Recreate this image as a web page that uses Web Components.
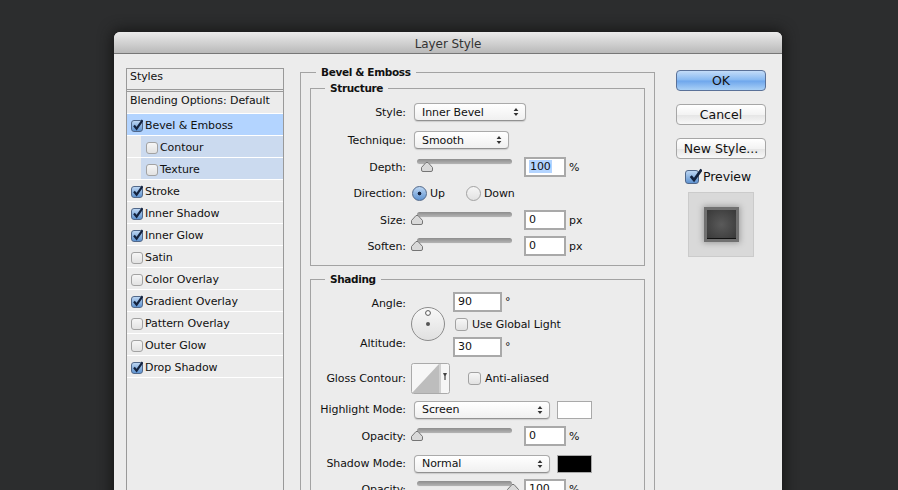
<!DOCTYPE html>
<html>
<head>
<meta charset="utf-8">
<title>Layer Style</title>
<style>
  html, body { margin: 0; height: 100%; overflow: hidden; }
  body {
    background: #2c2d2e;
    padding: 32px 116px 0 114px;
    box-sizing: border-box;
    font: 11px "DejaVu Sans", sans-serif;
    letter-spacing: -.08px;
    color: #111;
  }
</style>
</head>
<body>
<ps-dialog title="Layer Style">
  <ps-style-list slot="left">
    <ps-style-item header>Styles</ps-style-item>
    <ps-style-item>Blending Options: Default</ps-style-item>
    <ps-style-item check checked active>Bevel &amp; Emboss</ps-style-item>
    <ps-style-item check sub>Contour</ps-style-item>
    <ps-style-item check sub>Texture</ps-style-item>
    <ps-style-item check checked>Stroke</ps-style-item>
    <ps-style-item check checked>Inner Shadow</ps-style-item>
    <ps-style-item check checked>Inner Glow</ps-style-item>
    <ps-style-item check>Satin</ps-style-item>
    <ps-style-item check>Color Overlay</ps-style-item>
    <ps-style-item check checked>Gradient Overlay</ps-style-item>
    <ps-style-item check>Pattern Overlay</ps-style-item>
    <ps-style-item check>Outer Glow</ps-style-item>
    <ps-style-item check checked>Drop Shadow</ps-style-item>
  </ps-style-list>

  <ps-group slot="middle" outer legend="Bevel &amp; Emboss">
    <ps-group legend="Structure">
      <ps-row label="Style:" style="height:28px"><ps-select width="112">Inner Bevel</ps-select></ps-row>
      <ps-row label="Technique:" style="height:28px"><ps-select width="95">Smooth</ps-select></ps-row>
      <ps-row label="Depth:" style="height:26px"><ps-slider pos="10"></ps-slider><ps-num selected unit="%">100</ps-num></ps-row>
      <ps-row label="Direction:" style="height:27px">
        <ps-radio checked style="margin-right:20px">Up</ps-radio><ps-radio>Down</ps-radio>
      </ps-row>
      <ps-row label="Size:" style="height:26px"><ps-slider pos="0"></ps-slider><ps-num unit="px">0</ps-num></ps-row>
      <ps-row label="Soften:" style="height:26px;margin-bottom:-1px"><ps-slider pos="0"></ps-slider><ps-num unit="px">0</ps-num></ps-row>
    </ps-group>
    <ps-group legend="Shading" top="4" style="margin-top:6px">
      <ps-angle-block></ps-angle-block>
      <ps-row label="Gloss Contour:" style="height:36px;margin-top:3px">
        <ps-contour></ps-contour><ps-check style="margin-left:18px">Anti-aliased</ps-check>
      </ps-row>
      <ps-row label="Highlight Mode:" style="height:27px"><ps-select width="136">Screen</ps-select><ps-swatch color="#fff"></ps-swatch></ps-row>
      <ps-row label="Opacity:" style="height:26px"><ps-slider pos="0"></ps-slider><ps-num unit="%">0</ps-num></ps-row>
      <ps-row label="Shadow Mode:" style="height:29px"><ps-select width="136">Normal</ps-select><ps-swatch color="#000"></ps-swatch></ps-row>
      <ps-row label="Opacity:" style="height:22px"><ps-slider pos="100"></ps-slider><ps-num unit="%">100</ps-num></ps-row>
    </ps-group>
  </ps-group>

  <ps-button slot="right" primary>OK</ps-button>
  <ps-button slot="right">Cancel</ps-button>
  <ps-button slot="right">New Style...</ps-button>
  <ps-check slot="right" checked large style="margin:-3px 0 0 9px;font-size:12.5px">Preview</ps-check>
  <ps-preview slot="right"></ps-preview>
</ps-dialog>

<script>
const CHECK_MARK = '<path d="M3 6.5 L5.6 9.6 L11.6 1.2" fill="none" stroke="#14233f" stroke-width="2.2"/>';

// Caja de una casilla, marcada o no
function checkBox(checked) {
  const fill = checked ? "linear-gradient(#bcd6f3,#5f93d0)" : "linear-gradient(#f6f6f6,#e2e2e2)";
  const border = checked ? "#51688a" : "#a2a2a2";
  return `<span class="box" style="background:${fill};border-color:${border}">${checked ? `<svg viewBox="0 0 12 12" width="12" height="12">${CHECK_MARK}</svg>` : ""}</span>`;
}

class PsDialog extends HTMLElement {
  connectedCallback() {
    this.attachShadow({ mode: "open" }).innerHTML = `
      <style>
        :host { display: block; height: 600px; background: #ececec; border-radius: 6px 6px 0 0; box-shadow: 0 0 14px 2px #161616; }
        .title { height: 21px; line-height: 24px; text-align: center; color: #333; font-size: 12px;
          background: linear-gradient(#ebebeb, #b9b9b9); border-bottom: 1px solid #777; border-radius: 6px 6px 0 0; }
        .body { display: flex; padding: 14px 16px 0 12px; }
        .left { width: 158px; flex: none; }
        .middle { width: 355px; flex: none; margin: -3px 0 0 16px; }
        .right { width: 90px; flex: none; margin-left: 21px; padding-top: 2px; display: flex; flex-direction: column; }
      </style>
      <div class="title">${this.getAttribute("title")}</div>
      <div class="body">
        <div class="left"><slot name="left"></slot></div>
        <div class="middle"><slot name="middle"></slot></div>
        <div class="right"><slot name="right"></slot></div>
      </div>`;
  }
}

class PsStyleList extends HTMLElement {
  connectedCallback() {
    this.attachShadow({ mode: "open" }).innerHTML = `
      <style>
        :host { display: block; height: 600px; box-sizing: border-box; border: 1px solid #999; border-bottom: 0; }
      </style>
      <slot></slot>`;
  }
}

class PsStyleItem extends HTMLElement {
  connectedCallback() {
    const header = this.hasAttribute("header");
    const sub = this.hasAttribute("sub");
    const check = this.hasAttribute("check");
    const bg = this.hasAttribute("active") ? "#b3d4ff" : sub ? "#cbdaef" : "transparent";
    this.attachShadow({ mode: "open" }).innerHTML = `
      <style>
        :host { display: block; box-sizing: border-box; height: ${header ? 23 : 22}px;
          border-bottom: ${header ? "3px double #999" : "1px solid #fff"}; }
        .row { height: 21px; box-sizing: border-box; display: flex; gap: 2px; background: ${bg};
          align-items: ${check ? "center" : "flex-start"};
          margin-left: ${sub ? 14 : 0}px; padding: ${header ? 1 : 2}px 0 0 ${sub ? 5 : check ? 4 : 3}px; }
        .box { box-sizing: border-box; width: 12px; height: 12px; border: 1px solid; border-radius: 3px; flex: none; display: block; position: relative; }
        svg { position: absolute; left: -1px; top: -2px; }
      </style>
      <div class="row">${check ? checkBox(this.hasAttribute("checked")) : ""}<slot></slot></div>`;
  }
}

class PsGroup extends HTMLElement {
  connectedCallback() {
    const outer = this.hasAttribute("outer");
    const top = this.getAttribute("top") || 3;
    this.attachShadow({ mode: "open" }).innerHTML = `
      <style>
        :host { display: block; }
        fieldset { margin: 0; min-width: 0; border: 1px solid #a3a3a3; padding: ${outer ? "2px 9px 9px" : top + "px 0 7px"}; }
        legend { margin-left: ${outer ? 6 : 14}px; padding: 0 5px; font-weight: bold; font-size: 10.5px; letter-spacing: -.35px; line-height: 14px; }
      </style>
      <fieldset><legend>${this.getAttribute("legend")}</legend><slot></slot></fieldset>`;
  }
}

class PsRow extends HTMLElement {
  connectedCallback() {
    this.attachShadow({ mode: "open" }).innerHTML = `
      <style>
        :host { display: flex; align-items: center; }
        .label { width: 95px; flex: none; text-align: right; white-space: nowrap; margin-right: 5px; }
        .content { display: flex; align-items: center; flex: 1; }
      </style>
      <span class="label">${this.getAttribute("label")}</span>
      <div class="content"><slot></slot></div>`;
  }
}

class PsSelect extends HTMLElement {
  connectedCallback() {
    this.attachShadow({ mode: "open" }).innerHTML = `
      <style>
        :host { display: flex; align-items: center; justify-content: space-between; box-sizing: border-box;
          width: ${this.getAttribute("width")}px; height: 18px; margin-left: 3px; padding: 0 6px 0 7px;
          background: linear-gradient(#fff, #f0f0f0); border: 1px solid #aaa; border-bottom-color: #919191; border-radius: 4px; box-shadow: 0 1px 1px #ccc; }
      </style>
      <slot></slot>
      <svg width="6" height="10" viewBox="0 0 6 10"><path d="M3 1 L5.4 4 H.6Z M3 9 L5.4 6 H.6Z" fill="#333"/></svg>`;
  }
}

class PsSlider extends HTMLElement {
  connectedCallback() {
    const pos = Number(this.getAttribute("pos"));
    this.attachShadow({ mode: "open" }).innerHTML = `
      <style>
        :host { display: block; position: relative; width: 101px; height: 20px; flex: none; }
        .track { position: absolute; left: 6px; right: 0; top: 2px; height: 5px; border-radius: 2.5px;
          background: linear-gradient(#8d8d8d, #b5b5b5); box-shadow: 0 1px 0 #e8e8e8; }
        svg { position: absolute; left: ${pos * 0.96}px; top: 5px; }
      </style>
      <div class="track"></div>
      <svg width="12" height="10" viewBox="0 0 12 10"><path d="M5 .5 H7 L11.5 5.5 V8 Q11.5 9.5 10 9.5 H2 Q.5 9.5 .5 8 V5.5Z" fill="#d9d9d9" stroke="#757575"/></svg>`;
  }
}

class PsNum extends HTMLElement {
  connectedCallback() {
    const w = this.getAttribute("width") || 42;
    const unit = this.getAttribute("unit");
    this.attachShadow({ mode: "open" }).innerHTML = `
      <style>
        :host { display: flex; align-items: center; margin-left: ${this.getAttribute("gap") ?? 12}px; }
        .field { box-sizing: border-box; width: ${w}px; height: 20px; line-height: 16px; padding-left: 3px;
          background: #fff; border: 2px solid #a9a9a9; }
        .sel { background: #b3d4ff; padding: 0 1px; }
        .unit { margin-left: 3px; }
      </style>
      <div class="field"><span class="${this.hasAttribute("selected") ? "sel" : ""}"><slot></slot></span></div>
      <span class="unit">${unit}</span>`;
  }
}

class PsRadio extends HTMLElement {
  connectedCallback() {
    const on = this.hasAttribute("checked");
    this.attachShadow({ mode: "open" }).innerHTML = `
      <style>
        :host { display: flex; align-items: center; gap: 3px; margin-left: 1px; }
        .dot { width: 13px; height: 13px; border-radius: 50%; border: 1px solid ${on ? "#51688a" : "#a2a2a2"}; flex: none;
          background: ${on ? "radial-gradient(circle, #14233f 0 1.6px, transparent 2.2px), linear-gradient(#bcd6f3, #5f93d0)" : "linear-gradient(#f6f6f6, #e2e2e2)"}; }
      </style>
      <span class="dot"></span><slot></slot>`;
  }
}

class PsCheck extends HTMLElement {
  connectedCallback() {
    const large = this.hasAttribute("large");
    this.attachShadow({ mode: "open" }).innerHTML = `
      <style>
        :host { display: flex; align-items: center; gap: 4px; white-space: nowrap; }
        .box { width: ${large ? 12 : 11}px; height: ${large ? 12 : 11}px; border: 1px solid; border-radius: 3px; flex: none; display: block; position: relative; }
        svg { position: absolute; left: 1px; top: -3px; width: 15px; height: 15px; }
      </style>
      ${checkBox(this.hasAttribute("checked"))}<slot></slot>`;
  }
}

class PsAngleBlock extends HTMLElement {
  connectedCallback() {
    this.attachShadow({ mode: "open" }).innerHTML = `
      <style>
        :host { display: grid; grid-template-columns: 95px 34px auto; grid-template-rows: 23px 23px 21px; }
        .label { text-align: right; align-self: center; }
        .ang { margin-top: 3px; }
        .alt { margin-bottom: 6px; }
        .dial { grid-column: 2; grid-row: 1 / 4; align-self: center; margin-left: 5px; width: 34px; height: 34px; }
        .cell { grid-column: 3; display: flex; align-items: center; margin-left: 13px; }
      </style>
      <span class="label ang" style="grid-row:1">Angle:</span>
      <span class="label alt" style="grid-row:3">Altitude:</span>
      <svg class="dial" viewBox="0 0 34 34">
        <defs><linearGradient id="d" x1="0" y1="0" x2="0" y2="1"><stop offset="0" stop-color="#f8f8f8"/><stop offset="1" stop-color="#e0e0e0"/></linearGradient></defs>
        <circle cx="17" cy="17" r="16.5" fill="url(#d)" stroke="#8c8c8c"/>
        <circle cx="17" cy="17" r="2" fill="#555"/>
        <circle cx="17" cy="6" r="2.4" fill="#fff" stroke="#555"/>
      </svg>
      <div class="cell" style="grid-row:1"><ps-num width="49" gap="0" unit="°">90</ps-num></div>
      <div class="cell" style="grid-row:2"><ps-check style="margin-left:2px">Use Global Light</ps-check></div>
      <div class="cell" style="grid-row:3"><ps-num width="49" gap="0" unit="°">30</ps-num></div>`;
  }
}

class PsContour extends HTMLElement {
  connectedCallback() {
    this.attachShadow({ mode: "open" }).innerHTML = `
      <style>:host { display: block; width: 39px; height: 30px; flex: none; } svg { display: block; }</style>
      <svg width="39" height="31" viewBox="0 0 39 31">
        <rect x=".5" y=".5" width="38" height="30" rx="2" fill="#f6f6f6" stroke="#aaa"/>
        <path d="M1 30 L28 1 V30Z" fill="#bdbdbd"/>
        <path d="M29 .5 V30.5" stroke="#aaa"/>
        <path d="M32 10 H36 L34.6 13 V17 H33.4 V13Z" fill="#444"/>
      </svg>`;
  }
}

class PsSwatch extends HTMLElement {
  connectedCallback() {
    this.attachShadow({ mode: "open" }).innerHTML = `
      <style>:host { display: block; box-sizing: border-box; width: 35px; height: 18px; margin-left: 7px; background: ${this.getAttribute("color")}; border: 1px solid #a9a9a9; }</style>`;
  }
}

class PsButton extends HTMLElement {
  connectedCallback() {
    const primary = this.hasAttribute("primary");
    this.attachShadow({ mode: "open" }).innerHTML = `
      <style>
        :host { display: block; box-sizing: border-box; height: 21px; margin-bottom: 13px; text-align: center; line-height: 19px; font-size: 12.5px; letter-spacing: 0; white-space: nowrap;
          border-radius: 4px; border: 1px solid ${primary ? "#5a7198" : "#a6a6a6"};
          background: ${primary ? "linear-gradient(#c3dcf8, #86b8f1 48%, #6ea6ec 52%, #a9d0f6)" : "linear-gradient(#fff, #f3f3f3 50%, #e6e6e6 55%, #f8f8f8)"}; }
      </style>
      <slot></slot>`;
  }
}

class PsPreview extends HTMLElement {
  connectedCallback() {
    this.attachShadow({ mode: "open" }).innerHTML = `
      <style>
        :host { display: flex; align-items: center; justify-content: center; box-sizing: border-box; width: 66px; height: 65px; margin: 8px 0 0 12px;
          background: #d9d9d9; border: 1px solid #cbcbcb; }
        .sq { box-sizing: border-box; width: 35px; height: 35px; border: 3px solid #707070;
          background: radial-gradient(circle, #5a5a5a, #383838); box-shadow: 0 0 6px 1px #9c9c9c, inset 0 -1px #111; }
      </style>
      <div class="sq"></div>`;
  }
}

customElements.define("ps-dialog", PsDialog);
customElements.define("ps-style-list", PsStyleList);
customElements.define("ps-style-item", PsStyleItem);
customElements.define("ps-group", PsGroup);
customElements.define("ps-row", PsRow);
customElements.define("ps-select", PsSelect);
customElements.define("ps-slider", PsSlider);
customElements.define("ps-num", PsNum);
customElements.define("ps-radio", PsRadio);
customElements.define("ps-check", PsCheck);
customElements.define("ps-angle-block", PsAngleBlock);
customElements.define("ps-contour", PsContour);
customElements.define("ps-swatch", PsSwatch);
customElements.define("ps-button", PsButton);
customElements.define("ps-preview", PsPreview);
</script>
</body>
</html>
